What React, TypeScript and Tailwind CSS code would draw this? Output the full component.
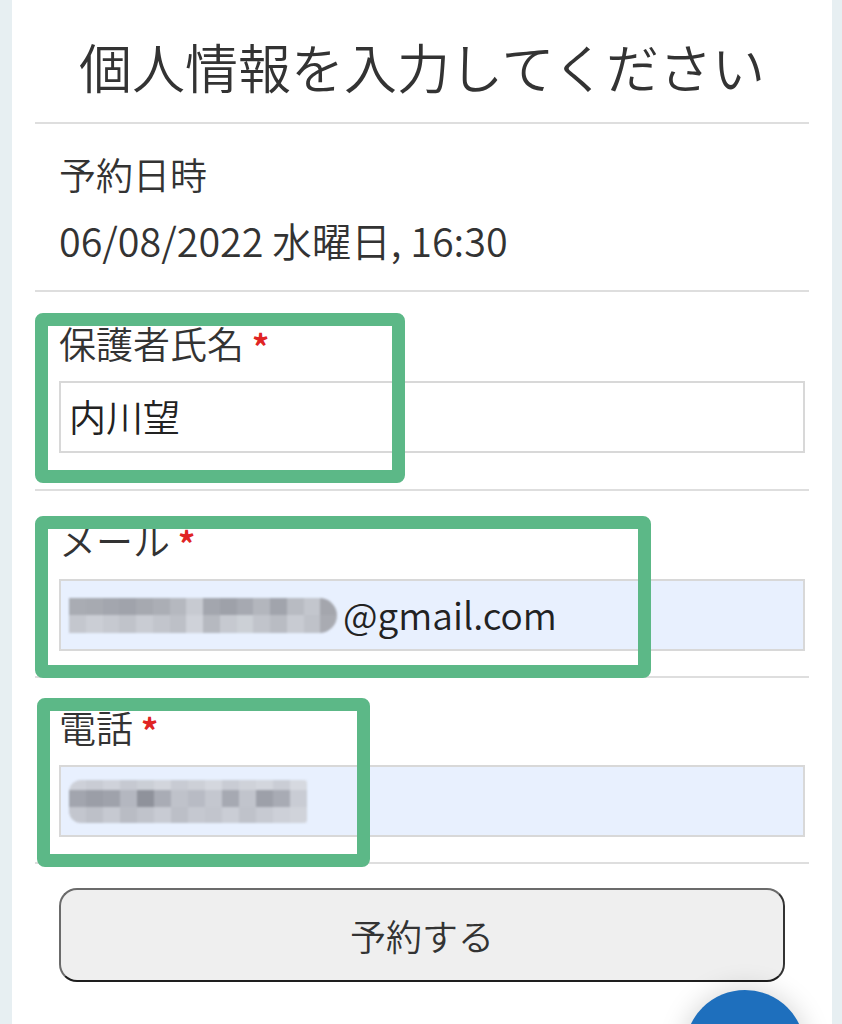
const font = { fontFamily: '"Noto Sans CJK JP", "Noto Sans", sans-serif' };

const emailRows = [
  ["#a9acb3", "#a7aab1", "#a3a6ae", "#a0a3ab", "#a6a9b0", "#abaeb5", "#b5b8bf", "#c7cad1", "#a3a6ae", "#9ea1a9", "#a6a9b1", "#b3b6bd", "#a1a4ac", "#b8bbc2", "#c3c6cd", "#a4a6ad"],
  ["#c4c7ce", "#cbced5", "#c6c9d0", "#c0c3ca", "#c9ccd3", "#c2c5cc", "#bdc0c7", "#cfd2d9", "#b6b9c0", "#c6c9d0", "#ccd0d6", "#c1c4cb", "#b9bcc3", "#c8cbd2", "#bfc2c9", "#a9abb2"],
];

const phoneRows = [
  ["#cdd0d8", "#c9ccd4", "#cfd2da", "#c6c9d1", "#cbcfd6", "#d2d5dc", "#c8cbd3", "#cdd0d7", "#d4d7de", "#c9ccd4", "#cfd2d9", "#d3d6dd", "#cacdd5", "#d6d9e0"],
  ["#a2a5ae", "#9b9ea7", "#9fa2ab", "#b4b7c0", "#8f929b", "#a9acb5", "#bfc2ca", "#b8bbc4", "#c4c7cf", "#a6a9b2", "#c1c4cc", "#9da0a9", "#a8abb4", "#c9ccd4"],
  ["#c3c6ce", "#bdc0c8", "#c6c9d1", "#b9bcc4", "#c0c3cb", "#c8cbd3", "#bcbfc7", "#c5c8d0", "#c2c5cd", "#cacdd5", "#bfc2ca", "#c7cad2", "#cdd0d8", "#d0d3da"],
];

// pixelated blur over the private part of the value
function Mosaic({ rows, heights, cell, className }: { rows: string[][]; heights: number[]; cell: number; className: string }) {
  return (
    <div className={`flex flex-col overflow-hidden blur-[1px] ${className}`}>
      {rows.map((row, i) => (
        <div key={i} className="flex" style={{ height: heights[i] }}>
          {row.map((c, j) => (
            <div key={j} style={{ width: cell, backgroundColor: c }} />
          ))}
        </div>
      ))}
    </div>
  );
}

function Divider() {
  return <div className="h-[2px] bg-[#dedede]" />;
}

function Label({ text }: { text: string }) {
  return (
    <div className="flex items-start h-[44px] text-[37px] leading-[44px] text-[#333]">
      <span>{text}</span>
      <span className="ml-[8px] mt-[8px] text-[34px] font-bold leading-none text-[#e02424]">*</span>
    </div>
  );
}

function Field({ children, filled }: { children?: React.ReactNode; filled?: boolean }) {
  return (
    <div
      className={`flex items-center h-[72px] mr-[4px] border-2 border-[#d8d8d8] pl-[8px] text-[37px] text-[#222] ${
        filled ? "bg-[#e8f0fe]" : "bg-white"
      }`}
    >
      {children}
    </div>
  );
}

function Marker({ className }: { className: string }) {
  return <div className={`absolute border-[13px] border-[#5cb887] rounded-[8px] ${className}`} />;
}

export default function App() {
  return (
    <div className="relative h-[1024px] overflow-hidden bg-[#e7eff2] font-[350]" style={font}>
      <div className="ml-[12px] w-[820px] h-full bg-white px-[23px]">
        <div className="flex h-[122px] items-center justify-center pt-[10px] text-[53px] leading-[53px] text-[#333]">
          個人情報を入力してください
        </div>
        <Divider />

        <div className="pl-[24px] pt-[28px] pb-[28px] text-[37px] leading-[44px] text-[#333]">
          <div>予約日時</div>
          <div className="mt-[22px] text-[39.5px]">06/08/2022 水曜日, 16:30</div>
        </div>
        <Divider />

        <div className="pl-[24px] pt-[29px] pb-[36px]">
          <Label text="保護者氏名" />
          <div className="mt-[16px]">
            <Field>内川望</Field>
          </div>
        </div>
        <Divider />

        <div className="pl-[24px] pt-[27px] pb-[25px]">
          <Label text="メール" />
          <div className="mt-[17px]">
            <Field filled>
              <Mosaic rows={emailRows} heights={[17, 18]} cell={16.75} className="rounded-r-full rounded-l-[4px]" />
              <span className="ml-[6px]">@gmail.com</span>
            </Field>
          </div>
        </div>
        <Divider />

        <div className="pl-[24px] pt-[27px] pb-[25px]">
          <Label text="電話" />
          <div className="mt-[16px]">
            <Field filled>
              <Mosaic rows={phoneRows} heights={[10, 17, 16]} cell={17} className="rounded-l-[12px] rounded-r-[3px]" />
            </Field>
          </div>
        </div>
        <Divider />

        <div className="px-[24px] pt-[24px]">
          <button className="flex w-full h-[94px] items-center justify-center rounded-[18px] border-2 border-[#6b6b6b] border-b-[#1e1e1e] border-r-[#333] bg-[#efefef] text-[36px] text-[#333]">
            予約する
          </button>
        </div>
      </div>

      <Marker className="left-[35px] top-[313px] w-[370px] h-[170px]" />
      <Marker className="left-[35px] top-[516px] w-[616px] h-[162px]" />
      <Marker className="left-[37px] top-[698px] w-[333px] h-[169px]" />

      <div className="absolute left-[685px] top-[990px] w-[120px] h-[120px] rounded-full bg-[#1e6fbd] shadow-[0_0_28px_rgba(0,0,0,0.18)]" />
    </div>
  );
}
